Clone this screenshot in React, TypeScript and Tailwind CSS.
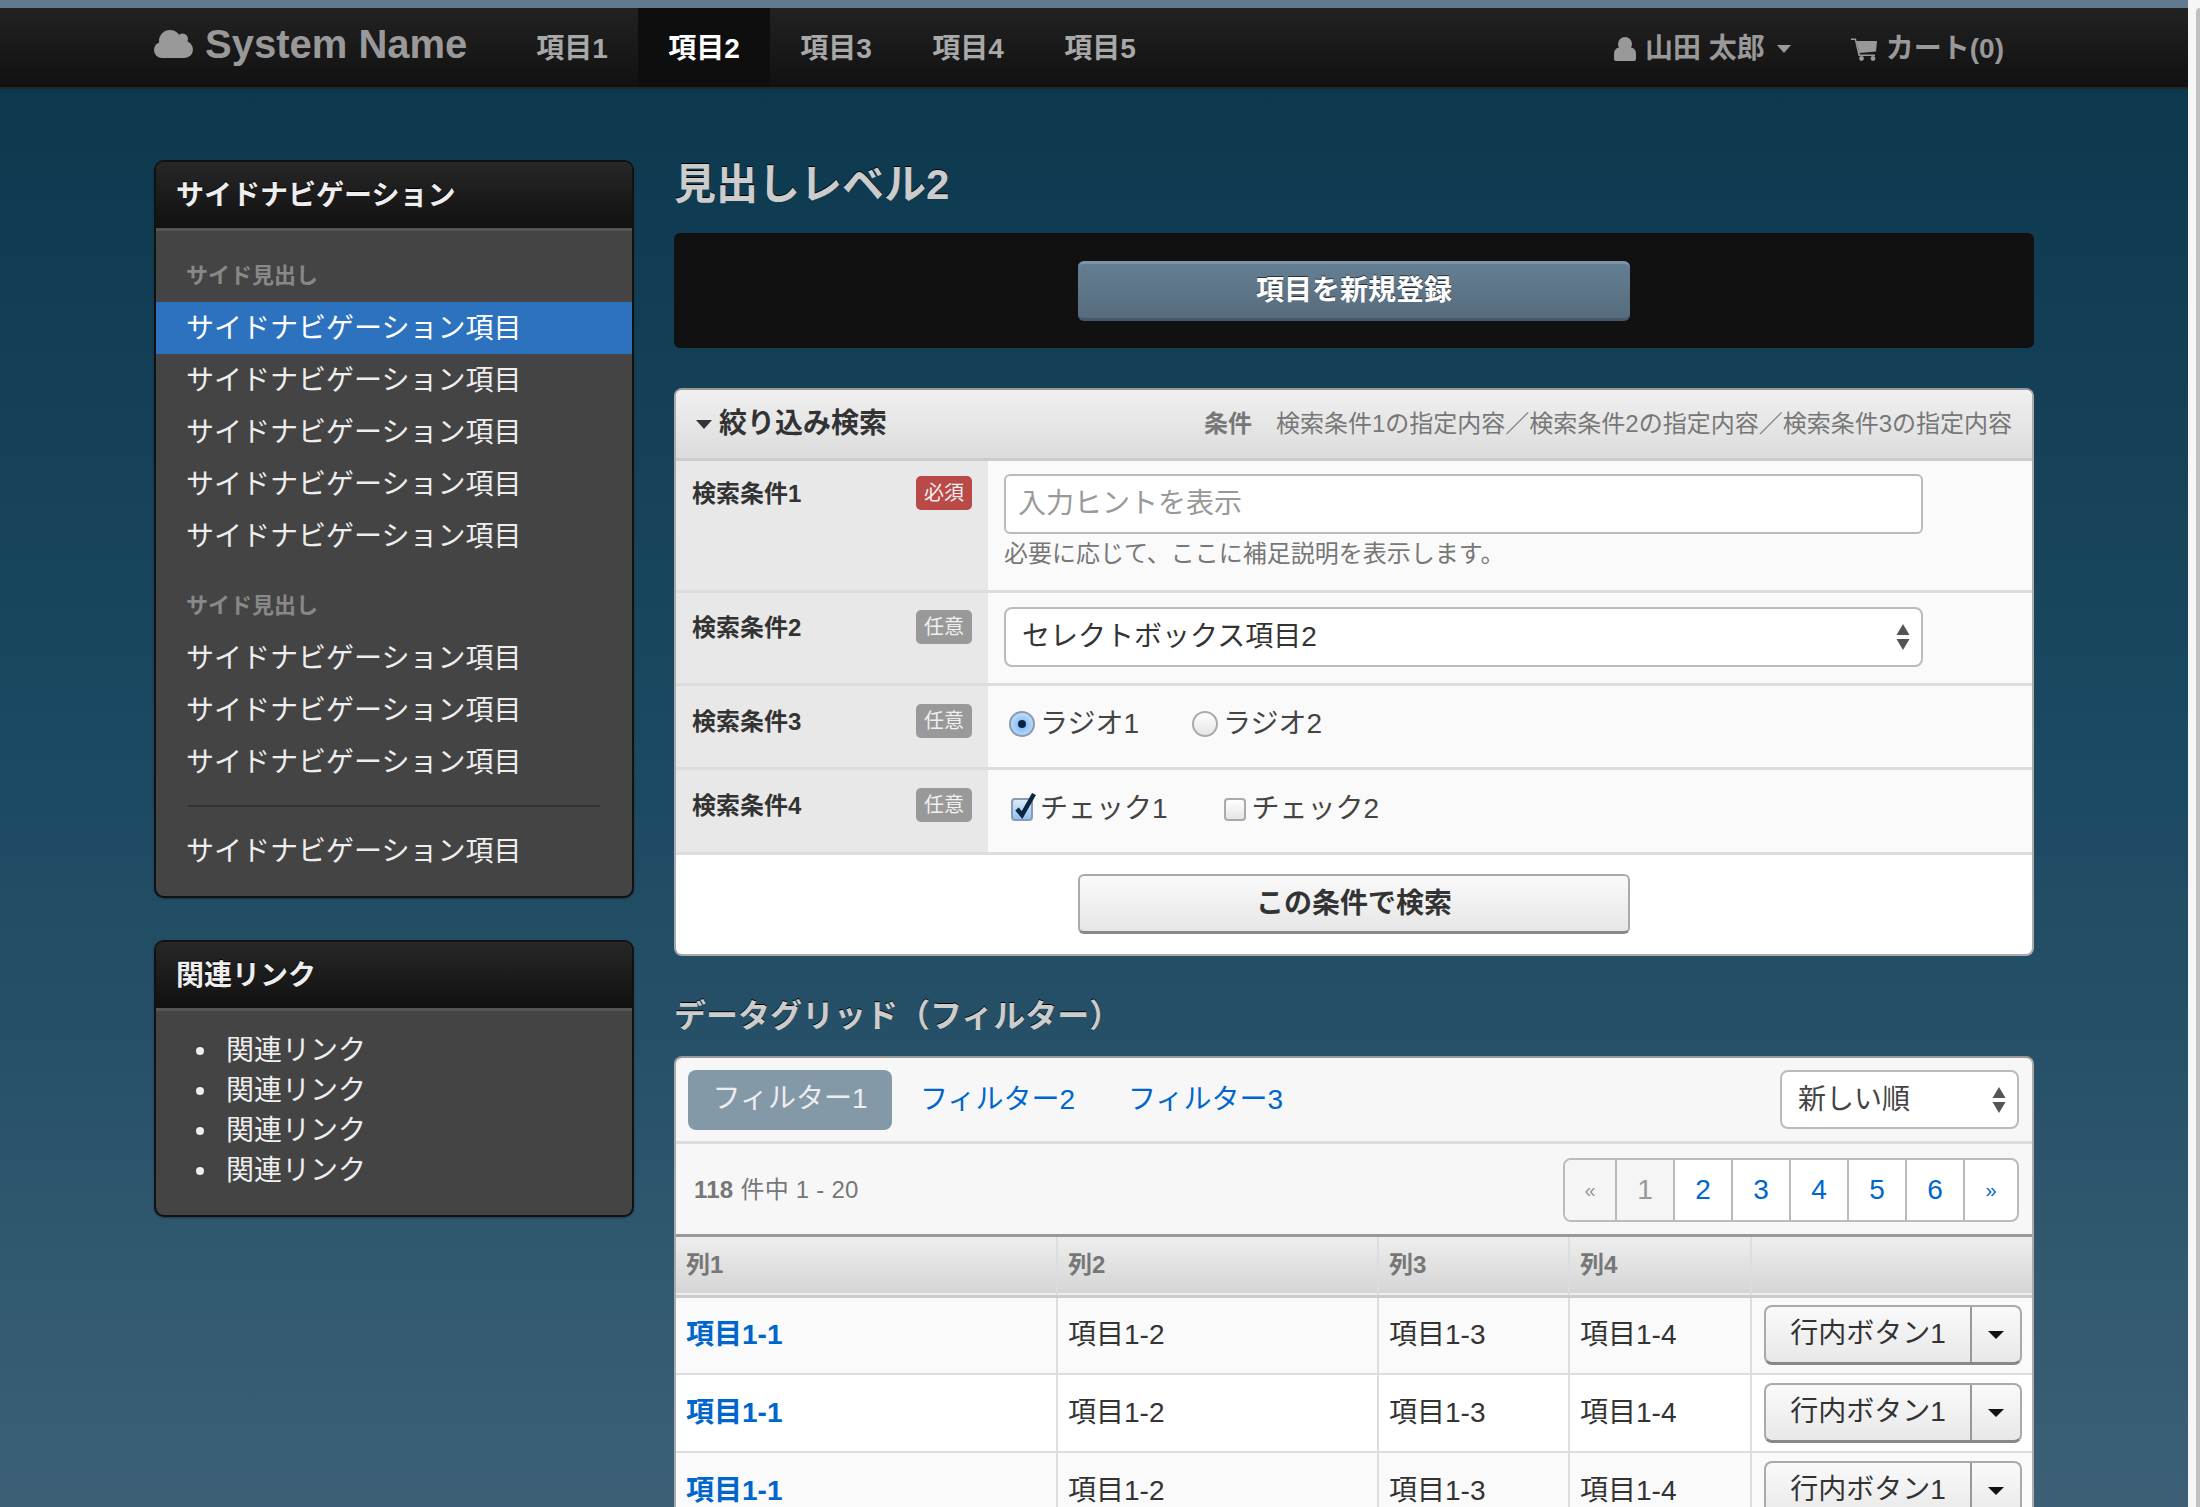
import React from 'react';

const sideItem = 'サイドナビゲーション項目';

function Caret({ className }: { className?: string }) {
  return <span className={`inline-block w-0 h-0 border-x-[8px] border-x-transparent border-t-[8px] ${className ?? ''}`} />;
}

function UpDown() {
  return (
    <svg width="16" height="26" viewBox="0 0 16 26" className="fill-[#555]">
      <path d="M8 0 L14.5 11 L1.5 11 Z" />
      <path d="M8 26 L14.5 15 L1.5 15 Z" />
    </svg>
  );
}

function CloudIcon() {
  return (
    <svg width="39" height="28" viewBox="0 0 39 28" className="fill-[#999]">
      <circle cx="16" cy="11" r="11" />
      <circle cx="28.5" cy="9" r="5.5" />
      <circle cx="8" cy="20" r="8" />
      <circle cx="30.5" cy="19.5" r="8.5" />
      <rect x="8" y="14" width="22" height="14" />
    </svg>
  );
}

function UserIcon() {
  return (
    <svg width="22" height="24" viewBox="0 0 22 24" className="fill-[#999] mr-[9px]">
      <circle cx="11" cy="7" r="7" />
      <path d="M0 22 V17 Q0 11 5.5 10.5 Q11 16.5 16.5 10.5 Q22 11 22 17 V22 Q22 24 20 24 H2 Q0 24 0 22 Z" />
    </svg>
  );
}

function CartIcon() {
  return (
    <svg width="26" height="23" viewBox="0 0 26 23" className="fill-[#999] mr-[9px]">
      <path d="M0 0.5 H5 L9 16.5 H24 V18 H7.5 L3.8 2 H0 Z" />
      <path d="M5.5 3 H26 L25 13.5 L8.5 15 Z" />
      <circle cx="10.5" cy="20.5" r="2.4" />
      <circle cx="22" cy="20.5" r="2.4" />
    </svg>
  );
}

function SidePanel({ title, children }: { title: string; children: React.ReactNode }) {
  return (
    <section className="rounded-[10px] border-2 border-[#111] overflow-hidden bg-[#444] shadow-[0_1px_2px_rgba(0,0,0,0.3)]">
      <h3 className="h-[69px] pt-[2px] flex items-center px-[20px] text-[28px] font-bold text-[#eee] bg-gradient-to-b from-[#272727] to-[#111] border-b-[3px] border-[#555] [text-shadow:0_-1px_0_#000]">
        {title}
      </h3>
      {children}
    </section>
  );
}

function SideLink({ active }: { active?: boolean }) {
  return (
    <a className={`block h-[52px] leading-[54px] px-[30px] text-[28px] text-[#eee] ${active ? 'bg-[#2d72bf] text-white' : ''}`}>{sideItem}</a>
  );
}

function SideHead({ label }: { label: string }) {
  return <div className="h-[52px] leading-[52px] px-[30px] text-[22px] font-bold text-[#888]">{label}</div>;
}

function FormRow({ label, required, rowClass, labelClass, valueClass, children }: { label: string; required?: boolean; rowClass: string; labelClass: string; valueClass: string; children: React.ReactNode }) {
  return (
    <div className={`flex ${rowClass} border-b-[3px] border-[#ddd]`}>
      <div className={`w-[312px] shrink-0 bg-[#e8e8e8] pl-[16px] pr-[16px] flex justify-between items-start ${labelClass}`}>
        <span className="text-[24px] font-bold text-[#333] leading-[36px]">{label}</span>
        <span className={`w-[56px] h-[34px] rounded-[5px] text-[20px] leading-[34px] text-center text-[#f0f0f0] ${required ? 'bg-[#b94a48]' : 'bg-[#999]'}`}>
          {required ? '必須' : '任意'}
        </span>
      </div>
      <div className={`flex-1 bg-[#fafafa] pl-[16px] ${valueClass}`}>{children}</div>
    </div>
  );
}

function Radio({ on }: { on?: boolean }) {
  return (
    <span className={`w-[26px] h-[26px] rounded-full border-2 flex items-center justify-center ${on ? 'border-[#8d9bb0] bg-[radial-gradient(circle_at_50%_55%,#74b6f3_0%,#a9d2f8_55%,#e3effb_100%)]' : 'border-[#aaa] bg-gradient-to-b from-[#fff] to-[#e5e5e5]'}`}>
      {on && <span className="w-[8px] h-[8px] rounded-full bg-[#0b2440]" />}
    </span>
  );
}

function Check({ on }: { on?: boolean }) {
  return (
    <span className={`relative w-[22px] h-[23px] rounded-[4px] border-2 ${on ? 'border-[#8d9bb0] bg-gradient-to-b from-[#dcebfa] to-[#8cc3f5]' : 'border-[#aaa] bg-gradient-to-b from-[#fff] to-[#e5e5e5]'}`}>
      {on && (
        <svg viewBox="0 0 26 30" className="absolute left-[-2px] top-[-9px] w-[26px] h-[30px] fill-none stroke-[#0b2440] stroke-[4.5]">
          <path d="M6 18 L11 24 L23 3" />
        </svg>
      )}
    </span>
  );
}

function RowButton() {
  return (
    <div className="flex h-[60px] w-[258px] rounded-[8px] border-2 border-[#aaa] border-b-[3px] border-b-[#888] bg-gradient-to-b from-[#fafafa] to-[#e8e8e8] text-[28px] text-[#333]">
      <span className="w-[206px] text-center leading-[54px] border-r-2 border-[#999]">行内ボタン1</span>
      <span className="flex-1 flex items-center justify-center"><Caret className="border-t-[#111]" /></span>
    </div>
  );
}

const pages = ['«', '1', '2', '3', '4', '5', '6', '»'];

export default function App() {
  return (
    <div className="h-[1507px] overflow-hidden flex font-['Liberation_Sans','Noto_Sans_CJK_JP',sans-serif]">
      <div className="w-[2188px] shrink-0 h-full bg-[linear-gradient(to_bottom,#0d394f_6%,#1c4a62_52%,#265068_69%,#2f586f_82%,#3c5f76_100%)]">
        <div className="h-[8px] bg-[#627a8f]" />
        <nav className="h-[81px] bg-gradient-to-b from-[#222] to-[#111] border-b-2 border-[#252525] px-[154px] flex items-stretch">
          <a className="flex items-center gap-[12px] w-[352px] text-[#999] text-[40px] font-bold pb-[7px]">
            <CloudIcon />
            System Name
          </a>
          {['項目1', '項目2', '項目3', '項目4', '項目5'].map((t, i) => (
            <a key={t} className={`w-[132px] flex items-center justify-center pt-[3px] text-[28px] font-bold ${i === 1 ? 'bg-[#0e0e0e] text-white' : 'text-[#a8a8a8]'}`}>{t}</a>
          ))}
          <div className="ml-auto pr-[30px] pt-[3px] flex items-center text-[28px] font-bold text-[#999]">
            <UserIcon />
            <span>山田 太郎</span>
            <Caret className="ml-[12px] border-t-[#999] !border-x-[7px]" />
            <span className="w-[60px]" />
            <CartIcon />
            <span>カート(0)</span>
          </div>
        </nav>

        <div className="px-[154px] pt-[71px] flex gap-[40px]">
          <aside className="w-[480px] shrink-0">
            <SidePanel title="サイドナビゲーション">
              <div className="pt-[19px] pb-[19px]">
                <SideHead label="サイド見出し" />
                <SideLink active />
                <SideLink />
                <SideLink />
                <SideLink />
                <SideLink />
                <div className="mt-[18px]"><SideHead label="サイド見出し" /></div>
                <SideLink />
                <SideLink />
                <SideLink />
                <div className="mx-[32px] mt-[17px] mb-[18px] border-t-2 border-[#333]" />
                <SideLink />
              </div>
            </SidePanel>
            <div className="mt-[42px]">
              <SidePanel title="関連リンク">
                <ul className="pl-[40px] pt-[20px] pb-[24px] text-[28px] text-[#eee]">
                  {[0, 1, 2, 3].map((i) => (
                    <li key={i} className="h-[40px] flex items-center gap-[22px]">
                      <span className="w-[8px] h-[8px] rounded-full bg-[#eee]" />
                      関連リンク
                    </li>
                  ))}
                </ul>
              </SidePanel>
            </div>
          </aside>

          <main className="flex-1 min-w-0">
            <h2 className="h-[73px] pb-[24px] flex items-center text-[42px] font-bold text-[#ccc] [text-shadow:0_-1px_0_#000]">見出しレベル2</h2>

            <div className="h-[115px] rounded-[6px] bg-[#111] flex items-center justify-center">
              <button className="w-[552px] h-[60px] rounded-[6px] border-t-[3px] border-t-[#7f95a6] border-b-[3px] border-b-[#45596a] bg-gradient-to-b from-[#647e92] to-[#566c7d] text-[28px] font-bold text-white [text-shadow:0_-1px_0_#333]">
                項目を新規登録
              </button>
            </div>

            <section className="mt-[40px] rounded-[8px] border-2 border-[#aaa] border-t-[#999] bg-white overflow-hidden">
              <header className="h-[71px] px-[20px] flex items-center justify-between bg-gradient-to-b from-[#f0f0f0] to-[#dcdcdc] border-b-[3px] border-[#ccc]">
                <span className="flex items-center text-[28px] font-bold text-[#333]">
                  <Caret className="border-t-[#333] mr-[7px] !border-x-[8px] !border-t-[9px]" />
                  絞り込み検索
                </span>
                <span className="text-[24px] text-[#777]">
                  <b className="mr-[24px]">条件</b>検索条件1の指定内容／検索条件2の指定内容／検索条件3の指定内容
                </span>
              </header>

              <FormRow label="検索条件1" required rowClass="h-[132px]" labelClass="pt-[15px]" valueClass="pt-[13px]">
                <input
                  readOnly
                  placeholder="入力ヒントを表示"
                  className="block w-[919px] h-[60px] px-[12px] rounded-[6px] border-2 border-[#bbb] bg-white text-[28px] placeholder:text-[#999] outline-none"
                />
                <p className="mt-[2px] text-[24px] leading-[36px] text-[#777]">必要に応じて、ここに補足説明を表示します。</p>
              </FormRow>

              <FormRow label="検索条件2" rowClass="h-[93px]" labelClass="pt-[17px]" valueClass="pt-[14px]">
                <div className="w-[919px] h-[60px] pl-[16px] pr-[10px] rounded-[8px] border-2 border-[#bbb] bg-white flex items-center justify-between text-[28px] text-[#333]">
                  セレクトボックス項目2
                  <UpDown />
                </div>
              </FormRow>

              <FormRow label="検索条件3" rowClass="h-[84px]" labelClass="pt-[18px]" valueClass="pt-[14px]">
                <div className="flex items-center h-[48px] text-[28px] text-[#444]">
                  <span className="ml-[5px] mr-[5px]"><Radio on /></span>
                  ラジオ1
                  <span className="ml-[53px] mr-[5px]"><Radio /></span>
                  ラジオ2
                </div>
              </FormRow>

              <FormRow label="検索条件4" rowClass="h-[85px]" labelClass="pt-[18px]" valueClass="pt-[15px]">
                <div className="flex items-center h-[48px] text-[28px] text-[#444]">
                  <span className="ml-[7px] mr-[7px] flex"><Check on /></span>
                  チェック1
                  <span className="ml-[56px] mr-[6px] flex"><Check /></span>
                  チェック2
                </div>
              </FormRow>

              <div className="h-[99px] flex items-start justify-center pt-[19px]">
                <button className="w-[552px] h-[60px] rounded-[6px] border-2 border-[#aaa] border-b-[3px] border-b-[#888] bg-gradient-to-b from-[#fafafa] to-[#e6e6e6] text-[28px] font-bold text-[#333]">
                  この条件で検索
                </button>
              </div>
            </section>

            <h3 className="mt-[36px] mb-[16px] h-[48px] leading-[48px] text-[32px] font-bold text-[#ccc] [text-shadow:0_-1px_0_#000]">データグリッド（フィルター）</h3>

            <section className="rounded-t-[8px] border-2 border-b-0 border-[#aaa] border-t-[#999] bg-[#f7f7f7] overflow-hidden">
              <div className="h-[86px] flex items-center pl-[12px] pr-[13px] border-b-[3px] border-[#ddd]">
                <a className="w-[204px] h-[60px] rounded-[8px] bg-[#8499a8] text-[#eee] text-[28px] leading-[58px] text-center">フィルター1</a>
                <a className="ml-[28px] text-[28px] text-[#0066cc]">フィルター2</a>
                <a className="ml-[53px] text-[28px] text-[#0066cc]">フィルター3</a>
                <div className="ml-auto w-[239px] h-[59px] pl-[16px] pr-[10px] rounded-[8px] border-2 border-[#bbb] bg-white flex items-center justify-between text-[28px] text-[#444]">
                  新しい順
                  <UpDown />
                </div>
              </div>

              <div className="h-[93px] flex items-center pl-[18px] pr-[13px] pt-[2px] border-b-[3px] border-[#999]">
                <span className="text-[24px] tracking-[0.25px] text-[#777]"><b>118</b> 件中 1 - 20</span>
                <div className="ml-auto flex h-[64px] rounded-[8px] border-2 border-[#bbb] overflow-hidden bg-white">
                  {pages.map((p, i) => (
                    <a
                      key={p}
                      className={`flex items-center justify-center border-[#bbb] ${i < pages.length - 1 ? 'border-r-2' : ''} ${i === 0 || i === pages.length - 1 ? 'w-[52px] text-[20px]' : 'w-[58px] text-[28px]'} ${i < 2 ? 'bg-[#f5f5f5] text-[#999]' : 'text-[#0066cc]'}`}
                    >
                      {p}
                    </a>
                  ))}
                </div>
              </div>

              <table className="w-full table-fixed border-collapse text-[28px] text-[#333]">
                <colgroup>
                  <col className="w-[381px]" />
                  <col className="w-[321px]" />
                  <col className="w-[191px]" />
                  <col className="w-[182px]" />
                  <col />
                </colgroup>
                <thead>
                  <tr className="h-[59px] bg-gradient-to-b from-[#eee] to-[#d5d5d5] border-b-[3px] border-[#ccc] text-left text-[24px] font-bold text-[#777]">
                    {['列1', '列2', '列3', '列4', ''].map((h) => (
                      <th key={h} className="pl-[10px] pr-0 pb-[2px] border-l-2 first:border-l-0 border-[#ddd]">{h}</th>
                    ))}
                  </tr>
                </thead>
                <tbody>
                  {[0, 1, 2].map((r) => (
                    <tr key={r} className={`h-[78px] border-b-2 border-[#ddd] ${r % 2 === 0 ? 'bg-[#fafafa]' : 'bg-white'}`}>
                      <td className="pl-[10px] border-r-2 border-[#ddd] font-bold text-[#0066cc]">項目1-1</td>
                      <td className="pl-[10px] border-r-2 border-[#ddd]">項目1-2</td>
                      <td className="pl-[10px] border-r-2 border-[#ddd]">項目1-3</td>
                      <td className="pl-[10px] border-r-2 border-[#ddd]">項目1-4</td>
                      <td className="pl-[12px]"><RowButton /></td>
                    </tr>
                  ))}
                </tbody>
              </table>
            </section>
          </main>
        </div>
      </div>
      {/* window scrollbar */}
      <div className="flex-1 flex bg-[#f6f6f6]">
        <div className="flex-1" />
        <div className="w-[4px] mt-[8px] rounded-tl-[4px] bg-[#c0c0c0]" />
      </div>
    </div>
  );
}
